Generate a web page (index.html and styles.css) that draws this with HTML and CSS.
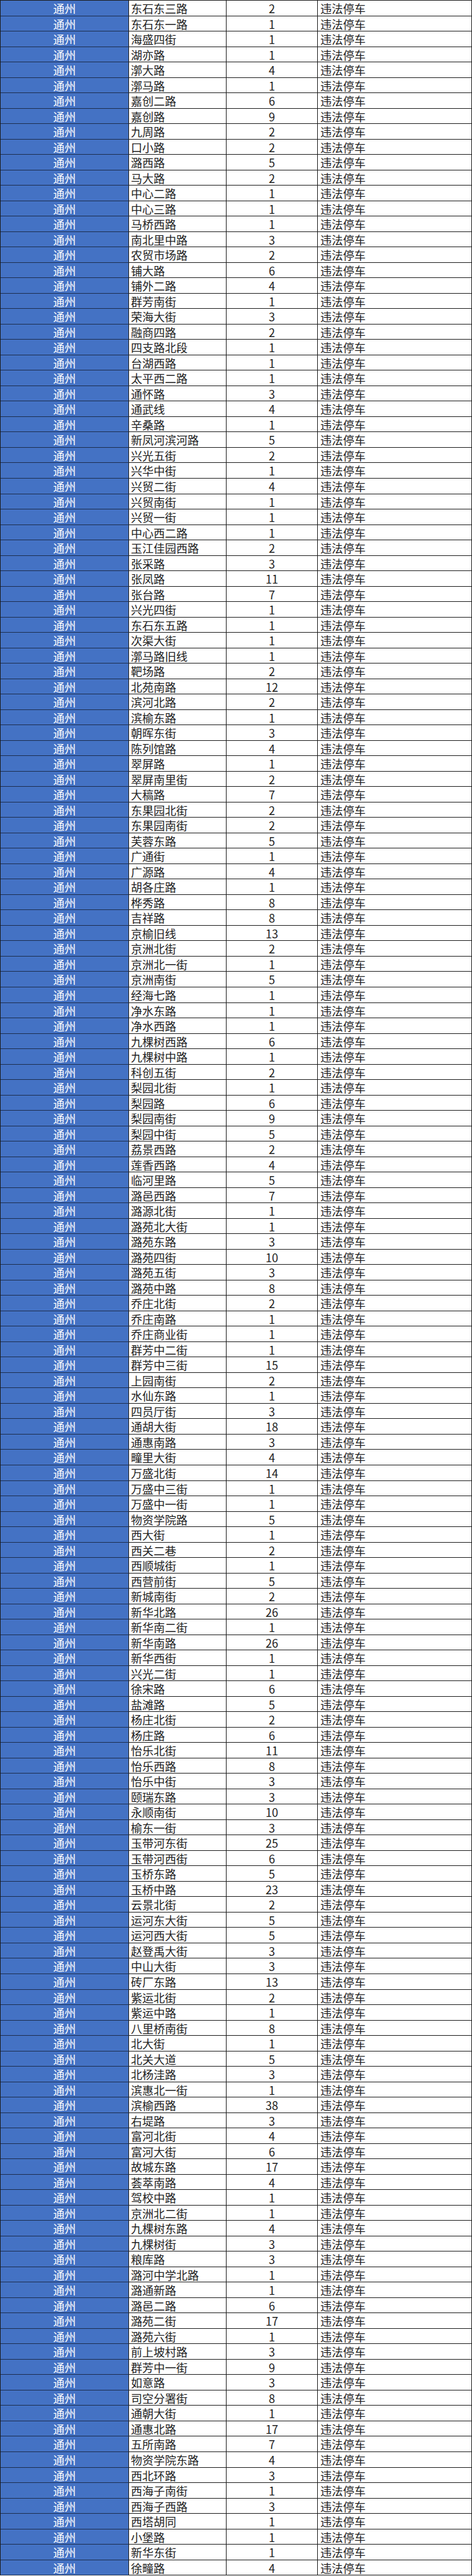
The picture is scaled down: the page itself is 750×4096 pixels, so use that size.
FILE: index.html
```html
<!DOCTYPE html>
<html lang="zh-CN">
<head>
<meta charset="utf-8">
<title>通州 违法停车</title>
<link rel="stylesheet" href="styles.css">
</head>
<body>
<div class="sheet">
<div class="d">通州</div><div class="r">东石东三路</div><div class="n">2</div><div class="t">违法停车</div>
<div class="d">通州</div><div class="r">东石东一路</div><div class="n">1</div><div class="t">违法停车</div>
<div class="d">通州</div><div class="r">海盛四街</div><div class="n">1</div><div class="t">违法停车</div>
<div class="d">通州</div><div class="r">湖亦路</div><div class="n">1</div><div class="t">违法停车</div>
<div class="d">通州</div><div class="r">漷大路</div><div class="n">4</div><div class="t">违法停车</div>
<div class="d">通州</div><div class="r">漷马路</div><div class="n">1</div><div class="t">违法停车</div>
<div class="d">通州</div><div class="r">嘉创二路</div><div class="n">6</div><div class="t">违法停车</div>
<div class="d">通州</div><div class="r">嘉创路</div><div class="n">9</div><div class="t">违法停车</div>
<div class="d">通州</div><div class="r">九周路</div><div class="n">2</div><div class="t">违法停车</div>
<div class="d">通州</div><div class="r">口小路</div><div class="n">2</div><div class="t">违法停车</div>
<div class="d">通州</div><div class="r">潞西路</div><div class="n">5</div><div class="t">违法停车</div>
<div class="d">通州</div><div class="r">马大路</div><div class="n">2</div><div class="t">违法停车</div>
<div class="d">通州</div><div class="r">中心二路</div><div class="n">1</div><div class="t">违法停车</div>
<div class="d">通州</div><div class="r">中心三路</div><div class="n">1</div><div class="t">违法停车</div>
<div class="d">通州</div><div class="r">马桥西路</div><div class="n">1</div><div class="t">违法停车</div>
<div class="d">通州</div><div class="r">南北里中路</div><div class="n">3</div><div class="t">违法停车</div>
<div class="d">通州</div><div class="r">农贸市场路</div><div class="n">2</div><div class="t">违法停车</div>
<div class="d">通州</div><div class="r">铺大路</div><div class="n">6</div><div class="t">违法停车</div>
<div class="d">通州</div><div class="r">铺外二路</div><div class="n">4</div><div class="t">违法停车</div>
<div class="d">通州</div><div class="r">群芳南街</div><div class="n">1</div><div class="t">违法停车</div>
<div class="d">通州</div><div class="r">荣海大街</div><div class="n">3</div><div class="t">违法停车</div>
<div class="d">通州</div><div class="r">融商四路</div><div class="n">2</div><div class="t">违法停车</div>
<div class="d">通州</div><div class="r">四支路北段</div><div class="n">1</div><div class="t">违法停车</div>
<div class="d">通州</div><div class="r">台湖西路</div><div class="n">1</div><div class="t">违法停车</div>
<div class="d">通州</div><div class="r">太平西二路</div><div class="n">1</div><div class="t">违法停车</div>
<div class="d">通州</div><div class="r">通怀路</div><div class="n">3</div><div class="t">违法停车</div>
<div class="d">通州</div><div class="r">通武线</div><div class="n">4</div><div class="t">违法停车</div>
<div class="d">通州</div><div class="r">辛桑路</div><div class="n">1</div><div class="t">违法停车</div>
<div class="d">通州</div><div class="r">新凤河滨河路</div><div class="n">5</div><div class="t">违法停车</div>
<div class="d">通州</div><div class="r">兴光五街</div><div class="n">2</div><div class="t">违法停车</div>
<div class="d">通州</div><div class="r">兴华中街</div><div class="n">1</div><div class="t">违法停车</div>
<div class="d">通州</div><div class="r">兴贸二街</div><div class="n">4</div><div class="t">违法停车</div>
<div class="d">通州</div><div class="r">兴贸南街</div><div class="n">1</div><div class="t">违法停车</div>
<div class="d">通州</div><div class="r">兴贸一街</div><div class="n">1</div><div class="t">违法停车</div>
<div class="d">通州</div><div class="r">中心西二路</div><div class="n">1</div><div class="t">违法停车</div>
<div class="d">通州</div><div class="r">玉江佳园西路</div><div class="n">2</div><div class="t">违法停车</div>
<div class="d">通州</div><div class="r">张采路</div><div class="n">3</div><div class="t">违法停车</div>
<div class="d">通州</div><div class="r">张凤路</div><div class="n">11</div><div class="t">违法停车</div>
<div class="d">通州</div><div class="r">张台路</div><div class="n">7</div><div class="t">违法停车</div>
<div class="d">通州</div><div class="r">兴光四街</div><div class="n">1</div><div class="t">违法停车</div>
<div class="d">通州</div><div class="r">东石东五路</div><div class="n">1</div><div class="t">违法停车</div>
<div class="d">通州</div><div class="r">次渠大街</div><div class="n">1</div><div class="t">违法停车</div>
<div class="d">通州</div><div class="r">漷马路旧线</div><div class="n">1</div><div class="t">违法停车</div>
<div class="d">通州</div><div class="r">靶场路</div><div class="n">2</div><div class="t">违法停车</div>
<div class="d">通州</div><div class="r">北苑南路</div><div class="n">12</div><div class="t">违法停车</div>
<div class="d">通州</div><div class="r">滨河北路</div><div class="n">2</div><div class="t">违法停车</div>
<div class="d">通州</div><div class="r">滨榆东路</div><div class="n">1</div><div class="t">违法停车</div>
<div class="d">通州</div><div class="r">朝晖东街</div><div class="n">3</div><div class="t">违法停车</div>
<div class="d">通州</div><div class="r">陈列馆路</div><div class="n">4</div><div class="t">违法停车</div>
<div class="d">通州</div><div class="r">翠屏路</div><div class="n">1</div><div class="t">违法停车</div>
<div class="d">通州</div><div class="r">翠屏南里街</div><div class="n">2</div><div class="t">违法停车</div>
<div class="d">通州</div><div class="r">大稿路</div><div class="n">7</div><div class="t">违法停车</div>
<div class="d">通州</div><div class="r">东果园北街</div><div class="n">2</div><div class="t">违法停车</div>
<div class="d">通州</div><div class="r">东果园南街</div><div class="n">2</div><div class="t">违法停车</div>
<div class="d">通州</div><div class="r">芙蓉东路</div><div class="n">5</div><div class="t">违法停车</div>
<div class="d">通州</div><div class="r">广通街</div><div class="n">1</div><div class="t">违法停车</div>
<div class="d">通州</div><div class="r">广源路</div><div class="n">4</div><div class="t">违法停车</div>
<div class="d">通州</div><div class="r">胡各庄路</div><div class="n">1</div><div class="t">违法停车</div>
<div class="d">通州</div><div class="r">桦秀路</div><div class="n">8</div><div class="t">违法停车</div>
<div class="d">通州</div><div class="r">吉祥路</div><div class="n">8</div><div class="t">违法停车</div>
<div class="d">通州</div><div class="r">京榆旧线</div><div class="n">13</div><div class="t">违法停车</div>
<div class="d">通州</div><div class="r">京洲北街</div><div class="n">2</div><div class="t">违法停车</div>
<div class="d">通州</div><div class="r">京洲北一街</div><div class="n">1</div><div class="t">违法停车</div>
<div class="d">通州</div><div class="r">京洲南街</div><div class="n">5</div><div class="t">违法停车</div>
<div class="d">通州</div><div class="r">经海七路</div><div class="n">1</div><div class="t">违法停车</div>
<div class="d">通州</div><div class="r">净水东路</div><div class="n">1</div><div class="t">违法停车</div>
<div class="d">通州</div><div class="r">净水西路</div><div class="n">1</div><div class="t">违法停车</div>
<div class="d">通州</div><div class="r">九棵树西路</div><div class="n">6</div><div class="t">违法停车</div>
<div class="d">通州</div><div class="r">九棵树中路</div><div class="n">1</div><div class="t">违法停车</div>
<div class="d">通州</div><div class="r">科创五街</div><div class="n">2</div><div class="t">违法停车</div>
<div class="d">通州</div><div class="r">梨园北街</div><div class="n">1</div><div class="t">违法停车</div>
<div class="d">通州</div><div class="r">梨园路</div><div class="n">6</div><div class="t">违法停车</div>
<div class="d">通州</div><div class="r">梨园南街</div><div class="n">9</div><div class="t">违法停车</div>
<div class="d">通州</div><div class="r">梨园中街</div><div class="n">5</div><div class="t">违法停车</div>
<div class="d">通州</div><div class="r">荔景西路</div><div class="n">2</div><div class="t">违法停车</div>
<div class="d">通州</div><div class="r">莲香西路</div><div class="n">4</div><div class="t">违法停车</div>
<div class="d">通州</div><div class="r">临河里路</div><div class="n">5</div><div class="t">违法停车</div>
<div class="d">通州</div><div class="r">潞邑西路</div><div class="n">7</div><div class="t">违法停车</div>
<div class="d">通州</div><div class="r">潞源北街</div><div class="n">1</div><div class="t">违法停车</div>
<div class="d">通州</div><div class="r">潞苑北大街</div><div class="n">1</div><div class="t">违法停车</div>
<div class="d">通州</div><div class="r">潞苑东路</div><div class="n">3</div><div class="t">违法停车</div>
<div class="d">通州</div><div class="r">潞苑四街</div><div class="n">10</div><div class="t">违法停车</div>
<div class="d">通州</div><div class="r">潞苑五街</div><div class="n">3</div><div class="t">违法停车</div>
<div class="d">通州</div><div class="r">潞苑中路</div><div class="n">8</div><div class="t">违法停车</div>
<div class="d">通州</div><div class="r">乔庄北街</div><div class="n">2</div><div class="t">违法停车</div>
<div class="d">通州</div><div class="r">乔庄南路</div><div class="n">1</div><div class="t">违法停车</div>
<div class="d">通州</div><div class="r">乔庄商业街</div><div class="n">1</div><div class="t">违法停车</div>
<div class="d">通州</div><div class="r">群芳中二街</div><div class="n">1</div><div class="t">违法停车</div>
<div class="d">通州</div><div class="r">群芳中三街</div><div class="n">15</div><div class="t">违法停车</div>
<div class="d">通州</div><div class="r">上园南街</div><div class="n">2</div><div class="t">违法停车</div>
<div class="d">通州</div><div class="r">水仙东路</div><div class="n">1</div><div class="t">违法停车</div>
<div class="d">通州</div><div class="r">四员厅街</div><div class="n">3</div><div class="t">违法停车</div>
<div class="d">通州</div><div class="r">通胡大街</div><div class="n">18</div><div class="t">违法停车</div>
<div class="d">通州</div><div class="r">通惠南路</div><div class="n">3</div><div class="t">违法停车</div>
<div class="d">通州</div><div class="r">疃里大街</div><div class="n">4</div><div class="t">违法停车</div>
<div class="d">通州</div><div class="r">万盛北街</div><div class="n">14</div><div class="t">违法停车</div>
<div class="d">通州</div><div class="r">万盛中三街</div><div class="n">1</div><div class="t">违法停车</div>
<div class="d">通州</div><div class="r">万盛中一街</div><div class="n">1</div><div class="t">违法停车</div>
<div class="d">通州</div><div class="r">物资学院路</div><div class="n">5</div><div class="t">违法停车</div>
<div class="d">通州</div><div class="r">西大街</div><div class="n">1</div><div class="t">违法停车</div>
<div class="d">通州</div><div class="r">西关二巷</div><div class="n">2</div><div class="t">违法停车</div>
<div class="d">通州</div><div class="r">西顺城街</div><div class="n">1</div><div class="t">违法停车</div>
<div class="d">通州</div><div class="r">西营前街</div><div class="n">5</div><div class="t">违法停车</div>
<div class="d">通州</div><div class="r">新城南街</div><div class="n">2</div><div class="t">违法停车</div>
<div class="d">通州</div><div class="r">新华北路</div><div class="n">26</div><div class="t">违法停车</div>
<div class="d">通州</div><div class="r">新华南二街</div><div class="n">1</div><div class="t">违法停车</div>
<div class="d">通州</div><div class="r">新华南路</div><div class="n">26</div><div class="t">违法停车</div>
<div class="d">通州</div><div class="r">新华西街</div><div class="n">1</div><div class="t">违法停车</div>
<div class="d">通州</div><div class="r">兴光二街</div><div class="n">1</div><div class="t">违法停车</div>
<div class="d">通州</div><div class="r">徐宋路</div><div class="n">6</div><div class="t">违法停车</div>
<div class="d">通州</div><div class="r">盐滩路</div><div class="n">5</div><div class="t">违法停车</div>
<div class="d">通州</div><div class="r">杨庄北街</div><div class="n">2</div><div class="t">违法停车</div>
<div class="d">通州</div><div class="r">杨庄路</div><div class="n">6</div><div class="t">违法停车</div>
<div class="d">通州</div><div class="r">怡乐北街</div><div class="n">11</div><div class="t">违法停车</div>
<div class="d">通州</div><div class="r">怡乐西路</div><div class="n">8</div><div class="t">违法停车</div>
<div class="d">通州</div><div class="r">怡乐中街</div><div class="n">3</div><div class="t">违法停车</div>
<div class="d">通州</div><div class="r">颐瑞东路</div><div class="n">3</div><div class="t">违法停车</div>
<div class="d">通州</div><div class="r">永顺南街</div><div class="n">10</div><div class="t">违法停车</div>
<div class="d">通州</div><div class="r">榆东一街</div><div class="n">3</div><div class="t">违法停车</div>
<div class="d">通州</div><div class="r">玉带河东街</div><div class="n">25</div><div class="t">违法停车</div>
<div class="d">通州</div><div class="r">玉带河西街</div><div class="n">6</div><div class="t">违法停车</div>
<div class="d">通州</div><div class="r">玉桥东路</div><div class="n">5</div><div class="t">违法停车</div>
<div class="d">通州</div><div class="r">玉桥中路</div><div class="n">23</div><div class="t">违法停车</div>
<div class="d">通州</div><div class="r">云景北街</div><div class="n">2</div><div class="t">违法停车</div>
<div class="d">通州</div><div class="r">运河东大街</div><div class="n">5</div><div class="t">违法停车</div>
<div class="d">通州</div><div class="r">运河西大街</div><div class="n">5</div><div class="t">违法停车</div>
<div class="d">通州</div><div class="r">赵登禹大街</div><div class="n">3</div><div class="t">违法停车</div>
<div class="d">通州</div><div class="r">中山大街</div><div class="n">3</div><div class="t">违法停车</div>
<div class="d">通州</div><div class="r">砖厂东路</div><div class="n">13</div><div class="t">违法停车</div>
<div class="d">通州</div><div class="r">紫运北街</div><div class="n">2</div><div class="t">违法停车</div>
<div class="d">通州</div><div class="r">紫运中路</div><div class="n">1</div><div class="t">违法停车</div>
<div class="d">通州</div><div class="r">八里桥南街</div><div class="n">8</div><div class="t">违法停车</div>
<div class="d">通州</div><div class="r">北大街</div><div class="n">1</div><div class="t">违法停车</div>
<div class="d">通州</div><div class="r">北关大道</div><div class="n">5</div><div class="t">违法停车</div>
<div class="d">通州</div><div class="r">北杨洼路</div><div class="n">3</div><div class="t">违法停车</div>
<div class="d">通州</div><div class="r">滨惠北一街</div><div class="n">1</div><div class="t">违法停车</div>
<div class="d">通州</div><div class="r">滨榆西路</div><div class="n">38</div><div class="t">违法停车</div>
<div class="d">通州</div><div class="r">右堤路</div><div class="n">3</div><div class="t">违法停车</div>
<div class="d">通州</div><div class="r">富河北街</div><div class="n">4</div><div class="t">违法停车</div>
<div class="d">通州</div><div class="r">富河大街</div><div class="n">6</div><div class="t">违法停车</div>
<div class="d">通州</div><div class="r">故城东路</div><div class="n">17</div><div class="t">违法停车</div>
<div class="d">通州</div><div class="r">荟萃南路</div><div class="n">4</div><div class="t">违法停车</div>
<div class="d">通州</div><div class="r">驾校中路</div><div class="n">1</div><div class="t">违法停车</div>
<div class="d">通州</div><div class="r">京洲北二街</div><div class="n">1</div><div class="t">违法停车</div>
<div class="d">通州</div><div class="r">九棵树东路</div><div class="n">4</div><div class="t">违法停车</div>
<div class="d">通州</div><div class="r">九棵树街</div><div class="n">3</div><div class="t">违法停车</div>
<div class="d">通州</div><div class="r">粮库路</div><div class="n">3</div><div class="t">违法停车</div>
<div class="d">通州</div><div class="r">潞河中学北路</div><div class="n">1</div><div class="t">违法停车</div>
<div class="d">通州</div><div class="r">潞通新路</div><div class="n">1</div><div class="t">违法停车</div>
<div class="d">通州</div><div class="r">潞邑二路</div><div class="n">6</div><div class="t">违法停车</div>
<div class="d">通州</div><div class="r">潞苑二街</div><div class="n">17</div><div class="t">违法停车</div>
<div class="d">通州</div><div class="r">潞苑六街</div><div class="n">1</div><div class="t">违法停车</div>
<div class="d">通州</div><div class="r">前上坡村路</div><div class="n">3</div><div class="t">违法停车</div>
<div class="d">通州</div><div class="r">群芳中一街</div><div class="n">9</div><div class="t">违法停车</div>
<div class="d">通州</div><div class="r">如意路</div><div class="n">3</div><div class="t">违法停车</div>
<div class="d">通州</div><div class="r">司空分署街</div><div class="n">8</div><div class="t">违法停车</div>
<div class="d">通州</div><div class="r">通朝大街</div><div class="n">1</div><div class="t">违法停车</div>
<div class="d">通州</div><div class="r">通惠北路</div><div class="n">17</div><div class="t">违法停车</div>
<div class="d">通州</div><div class="r">五所南路</div><div class="n">7</div><div class="t">违法停车</div>
<div class="d">通州</div><div class="r">物资学院东路</div><div class="n">4</div><div class="t">违法停车</div>
<div class="d">通州</div><div class="r">西北环路</div><div class="n">3</div><div class="t">违法停车</div>
<div class="d">通州</div><div class="r">西海子南街</div><div class="n">1</div><div class="t">违法停车</div>
<div class="d">通州</div><div class="r">西海子西路</div><div class="n">3</div><div class="t">违法停车</div>
<div class="d">通州</div><div class="r">西塔胡同</div><div class="n">1</div><div class="t">违法停车</div>
<div class="d">通州</div><div class="r">小堡路</div><div class="n">1</div><div class="t">违法停车</div>
<div class="d">通州</div><div class="r">新华东街</div><div class="n">1</div><div class="t">违法停车</div>
<div class="d">通州</div><div class="r">徐疃路</div><div class="n">4</div><div class="t">违法停车</div>
</div>
</body>
</html>
```
FILE: styles.css
```css
html, body {
  margin: 0;
  padding: 0;
  background: #ffffff;
}

.sheet {
  display: grid;
  grid-template-columns: 204px 155px 145px 1fr;
  grid-auto-rows: 24.52px;
  width: 750px;
  box-sizing: border-box;
  border-top: 1px solid #1c1c1c;
  border-left: 1px solid #1c1c1c;
  font-family: "Noto Sans CJK SC", "Noto Sans", sans-serif;
  font-size: 18px;
  color: #222222;
}

.sheet > div {
  box-sizing: border-box;
  border-right: 1px solid #1c1c1c;
  border-bottom: 1px solid #1c1c1c;
  line-height: 24px;
  white-space: nowrap;
  overflow: hidden;
}

.d {
  background: #4472c4;
  color: #ffffff;
  text-align: center;
  border-bottom-color: #1d2e4f !important;
}

.r {
  padding-left: 3px;
}

.n {
  text-align: center;
}

.t {
  padding-left: 4px;
}
```
